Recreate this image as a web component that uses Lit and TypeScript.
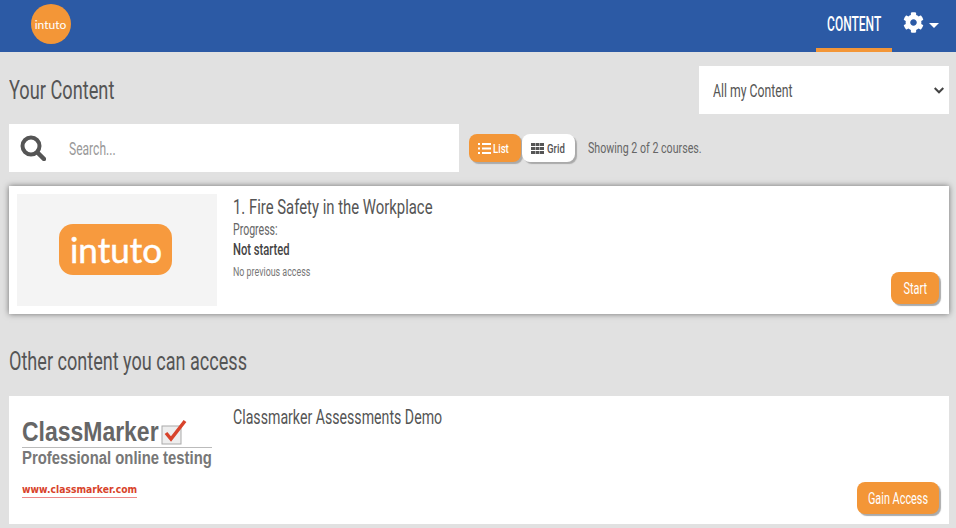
import { LitElement, html, css } from "lit";
import { customElement } from "lit/decorators.js";

@customElement("app-root")
export class AppRoot extends LitElement {
  static styles = css`
    :host { display: block; width: 956px; height: 528px; overflow: hidden; background: #e1e1e1; font-family: Roboto, sans-serif; font-weight: 400; color: #555; }
    * { box-sizing: border-box; }
    .sx { display: inline-block; white-space: nowrap; transform-origin: left center; }
    .sc { display: inline-block; white-space: nowrap; transform-origin: center; flex: none; }
    header { height: 52px; background: #2c5aa5; display: flex; align-items: stretch; padding-left: 30.5px; }
    .dot { width: 40px; height: 40px; margin-top: 4px; border-radius: 50%; background: #f39637; color: #fff; display: flex; align-items: center; justify-content: center; font: 400 12px Lato, sans-serif; }
    nav { margin-left: auto; display: flex; align-items: stretch; padding-right: 17px; }
    .tab { width: 76px; border-bottom: 4px solid #f39637; display: flex; align-items: center; justify-content: center; color: #fff; font-size: 20px; font-weight: 500; }
    .tab .sc { transform: scaleX(.6); }
    .gear { display: flex; align-items: center; gap: 5px; margin-left: 11px; }
    .gear .cog { margin-bottom: 7px; }
    .gear .caret { margin-bottom: 1px; }
    main { padding: 14px 7px 0 9px; }
    .top { display: flex; justify-content: space-between; align-items: center; height: 48px; }
    h1, h2 { margin: 0; font-weight: 400; font-size: 26px; color: #555; }
    h1 .sx { transform: scaleX(.7); }
    h2 .sx { transform: scaleX(.695); }
    .picker { width: 250px; height: 48px; background: #fff; color: #555; font-size: 18px; padding: 0 5px 0 14px; display: flex; align-items: center; justify-content: space-between; }
    .picker .sx { transform: scaleX(.68); }
    .tools { display: flex; align-items: center; margin-top: 10px; height: 48px; }
    .search { width: 450px; height: 48px; background: #fff; display: flex; align-items: center; padding-left: 11px; gap: 23px; }
    .search .sx { color: #999; font-size: 18px; transform: scaleX(.67); }
    .btn { border-radius: 8px; box-shadow: 2px 2px 1px #aaa; height: 28px; display: flex; align-items: center; justify-content: center; gap: 3px; font-size: 13px; font-weight: 500; }
    .list { width: 52px; margin-left: 10px; background: #f39637; color: #fff; gap: 2px; padding-right: 3px; }
    .grid { width: 53px; margin-left: 1px; background: #fff; color: #555; }
    .btn .sx { transform: scaleX(.74); }
    .list .sx { width: 16px; }
    .grid .sx { width: 19px; }
    .showing { margin-left: 13px; font-size: 15px; color: #666; }
    .showing .sx { transform: scaleX(.71); }
    .card { position: relative; height: 128px; background: #fff; padding: 8px; display: flex; gap: 16px; }
    .card.raised { margin-top: 14px; box-shadow: 0 0 6px rgba(0,0,0,.5); }
    .thumb { width: 200px; height: 112px; flex: none; display: flex; align-items: center; justify-content: center; }
    .gray { background: #f4f4f4; }
    .pill { width: 113px; height: 51px; margin: 0 4px 2px 0; padding-left: 2px; border-radius: 14px; background: #f79a3e; color: #fff; display: flex; align-items: center; justify-content: center; font: 400 35px Lato, sans-serif; -webkit-text-stroke: .5px #fff; }
    .info { padding-top: 1px; }
    .title { font-size: 21px; line-height: 25px; font-weight: 400; color: #555; }
    .title .sx { transform: scaleX(.708); }
    .title .alt { transform: scaleX(.674); }
    .progress { font-size: 16px; line-height: 20px; color: #666; }
    .progress .sx { transform: scaleX(.66); }
    .status { font-size: 16px; line-height: 20px; color: #444; font-weight: 500; }
    .status .sx { transform: scaleX(.7); }
    .last { font-size: 12px; line-height: 24px; color: #777; }
    .last .sx { transform: scaleX(.74); }
    .action { position: absolute; right: 10px; bottom: 10px; height: 32px; background: #f39637; color: #fff; border-radius: 8px; box-shadow: 2px 2px 1px #aaa; display: flex; align-items: center; justify-content: center; font-size: 17px; font-weight: 400; }
    .action .sc { transform: scaleX(.64); }
    .start { width: 48px; }
    .gain { width: 82px; }
    h2 { margin-top: 31px; margin-bottom: 19px; line-height: 32px; }
    .cm { flex-direction: column; align-items: flex-start; justify-content: flex-start; padding: 12px 0 0 5px; font-family: "Liberation Sans", sans-serif; font-weight: 700; color: #666; }
    .cm1 { font-size: 28px; line-height: 31px; display: flex; align-items: center; width: 190px; }
    .cm1 .sx { width: 139px; transform: scaleX(.82); }
    .cm2 { font-size: 18px; line-height: 20px; border-top: 1px solid #bbb; width: 190px; color: #777; }
    .cm2 .sx { transform: scaleX(.825); }
    .cm3 { font-size: 11px; line-height: 14px; color: #d8432b; margin-top: 15px; width: 115px; border-bottom: 1px solid #e88; font-family: "DejaVu Sans", sans-serif; }
    .cm3 .sx { transform: scaleX(.84); }
  `;

  render() {
    return html`
      <header>
        <div class="dot">intuto</div>
        <nav>
          <div class="tab"><span class="sc">CONTENT</span></div>
          <div class="gear">
            <svg class="cog" width="21" height="21" viewBox="0 0 512 512" fill="#fff"><path d="M487.4 315.7l-42.6-24.6c4.3-23.2 4.3-47 0-70.2l42.6-24.6c4.9-2.8 7.1-8.6 5.5-14-11.1-35.6-30-67.8-54.7-94.6-3.8-4.1-10-5.1-14.8-2.3L380.8 110c-17.9-15.4-38.5-27.3-60.8-35.1V25.800c0-5.600-3.900-10.500-9.400-11.700-36.700-8.200-74.300-7.800-109.200 0-5.500 1.200-9.400 6.100-9.400 11.700V75c-22.200 7.900-42.800 19.800-60.800 35.100L88.700 85.500c-4.900-2.800-11-1.900-14.800 2.300-24.700 26.700-43.600 58.900-54.700 94.600-1.700 5.400.6 11.200 5.500 14L67.300 221c-4.300 23.200-4.300 47 0 70.200l-42.600 24.600c-4.900 2.800-7.100 8.600-5.500 14 11.100 35.600 30 67.800 54.700 94.600 3.800 4.100 10 5.100 14.800 2.300l42.600-24.600c17.900 15.400 38.500 27.300 60.800 35.100v49.200c0 5.600 3.900 10.500 9.400 11.700 36.700 8.200 74.300 7.800 109.200 0 5.500-1.200 9.400-6.100 9.400-11.700v-49.200c22.200-7.900 42.800-19.800 60.800-35.100l42.600 24.600c4.900 2.800 11 1.900 14.800-2.300 24.700-26.700 43.600-58.900 54.700-94.600 1.500-5.500-.7-11.300-5.600-14.100zM256 336c-44.100 0-80-35.900-80-80s35.900-80 80-80 80 35.900 80 80-35.900 80-80 80z"/></svg>
            <svg class="caret" width="10" height="5" viewBox="0 0 10 5" fill="#fff"><path d="M0 0h10L5 5z"/></svg>
          </div>
        </nav>
      </header>
      <main>
        <div class="top">
          <h1><span class="sx">Your Content</span></h1>
          <div class="picker"><span class="sx">All my Content</span>
            <svg width="10" height="7" viewBox="0 0 10 7" fill="none" stroke="#444" stroke-width="2"><path d="M.7 1l4.300 4.300L9.300 1"/></svg>
          </div>
        </div>
        <div class="tools">
          <div class="search">
            <svg width="26" height="26" viewBox="0 0 26 26" fill="none" stroke="#555"><circle cx="11" cy="11" r="8.500" stroke-width="4"/><path d="M17.500 17.500L24 24" stroke-width="4.500" stroke-linecap="round"/></svg>
            <span class="sx">Search...</span>
          </div>
          <div class="btn list"><svg width="13" height="11" viewBox="0 0 13 11" fill="#fff"><path d="M0 0h2v2H0zM4 0h9v2H4zM0 4.500h2v2H0zM4 4.500h9v2H4zM0 9h2v2H0zM4 9h9v2H4z"/></svg><span class="sx">List</span></div>
          <div class="btn grid"><svg width="13" height="11" viewBox="0 0 13 11" fill="#555"><path d="M0 0h4v3H0zM4.500 0h4v3h-4zM9 0h4v3H9zM0 4h4v3H0zM4.500 4h4v3h-4zM9 4h4v3H9zM0 8h4v3H0zM4.500 8h4v3h-4zM9 8h4v3H9z"/></svg><span class="sx">Grid</span></div>
          <div class="showing"><span class="sx">Showing 2 of 2 courses.</span></div>
        </div>
        <div class="card raised">
          <div class="thumb gray"><div class="pill">intuto</div></div>
          <div class="info">
            <div class="title"><span class="sx">1. Fire Safety in the Workplace</span></div>
            <div class="progress"><span class="sx">Progress:</span></div>
            <div class="status"><span class="sx">Not started</span></div>
            <div class="last"><span class="sx">No previous access</span></div>
          </div>
          <div class="action start"><span class="sc">Start</span></div>
        </div>
        <h2><span class="sx">Other content you can access</span></h2>
        <div class="card">
          <div class="thumb cm">
            <div class="cm1"><span class="sx">ClassMarker</span><svg width="26" height="26" viewBox="0 0 26 26"><rect x="1" y="7" width="19" height="18" fill="#eee" stroke="#aaa"/><path d="M5 14l5 6L24 2" fill="none" stroke="#d8432b" stroke-width="3.500"/></svg></div>
            <div class="cm2"><span class="sx">Professional online testing</span></div>
            <div class="cm3"><span class="sx">www.classmarker.com</span></div>
          </div>
          <div class="info"><div class="title"><span class="sx alt">Classmarker Assessments Demo</span></div></div>
          <div class="action gain"><span class="sc">Gain Access</span></div>
        </div>
      </main>
    `;
  }
}
